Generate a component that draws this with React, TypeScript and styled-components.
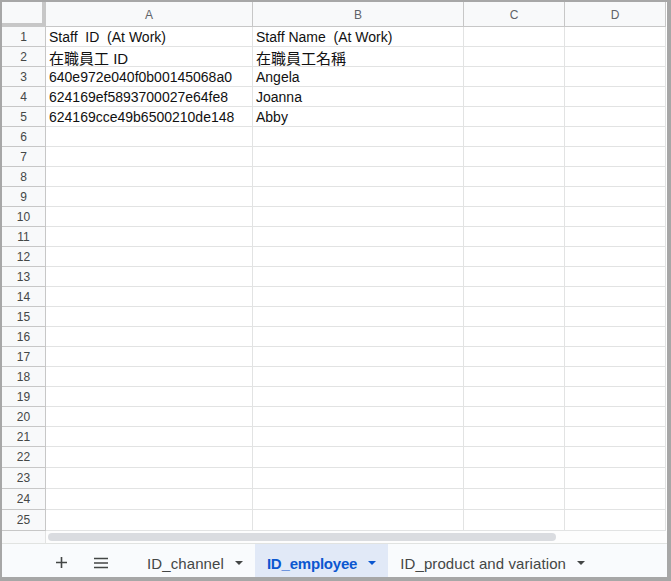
import styled, { createGlobalStyle } from "styled-components";

const GlobalStyle = createGlobalStyle`
  * { box-sizing: border-box; }
  html, body { margin: 0; padding: 0; background: #ffffff; overflow: hidden; }
  body { font-family: "Liberation Sans", Arial, "Noto Sans CJK TC", sans-serif; }
`;

const columns = ["A", "B", "C", "D"];

const data: Record<number, string[]> = {
  1: ["Staff  ID  (At Work)", "Staff Name  (At Work)"],
  2: ["在職員工 ID", "在職員工名稱"],
  3: ["640e972e040f0b00145068a0", "Angela"],
  4: ["624169ef5893700027e64fe8", "Joanna"],
  5: ["624169cce49b6500210de148", "Abby"],
};

const rows = Array.from({ length: 25 }, (_, i) => i + 1);

const tabs = [
  { name: "ID_channel", active: false },
  { name: "ID_employee", active: true },
  { name: "ID_product and variation", active: false },
];

function App() {
  return (
    <>
      <GlobalStyle />
      <Frame>
        <Sheet>
          <Corner />
          {columns.map((c) => (
            <ColHeader key={c}>{c}</ColHeader>
          ))}
          <Filler />
          {rows.map((r) => (
            <Row key={r}>
              <RowHeader>{r}</RowHeader>
              {columns.map((c, i) => (
                <Cell key={c} $cjk={r === 2}>
                  {data[r]?.[i] ?? ""}
                </Cell>
              ))}
              <Filler />
            </Row>
          ))}
        </Sheet>
        <ScrollRow>
          <ScrollStub />
          <Track>
            <Thumb />
          </Track>
        </ScrollRow>
        <TabBar>
          <IconButton aria-label="Add sheet">
            <svg width="13" height="13" viewBox="0 0 13 13">
              <path d="M6.5 1v11M1 6.5h11" stroke="#444746" strokeWidth="1.6" />
            </svg>
          </IconButton>
          <IconButton aria-label="All sheets">
            <svg width="16" height="12" viewBox="0 0 16 12">
              <path d="M1 1.5h14M1 6h14M1 10.5h14" stroke="#444746" strokeWidth="1.6" />
            </svg>
          </IconButton>
          <Tabs>
            {tabs.map((t) => (
              <Tab key={t.name} $active={t.active}>
                <span>{t.name}</span>
                <Caret $active={t.active} />
              </Tab>
            ))}
          </Tabs>
        </TabBar>
      </Frame>
    </>
  );
}

const Frame = styled.div`
  width: 671px;
  height: 581px;
  border-style: solid;
  border-color: #a7a7a7;
  border-width: 2px 4px 4px 2px;
  display: flex;
  flex-direction: column;
  background: #ffffff;
`;

const Sheet = styled.div`
  display: grid;
  grid-template-columns: 44px 207px 211px 101px 101px 1fr;
  grid-template-rows: 25px repeat(21, 20px) repeat(4, 21px);
`;

const Row = styled.div`
  display: contents;
`;

const Corner = styled.div`
  background: #f8f9fa;
  box-shadow: inset -4px -4px 0 #c7c7c7;
`;

const ColHeader = styled.div`
  background: #f8f9fa;
  border-right: 1px solid #c7c7c7;
  border-bottom: 1px solid #c7c7c7;
  display: flex;
  align-items: center;
  justify-content: center;
  font-size: 12px;
  color: #5f6368;
  padding-top: 1px;
`;

const RowHeader = styled.div`
  background: #f8f9fa;
  border-right: 1px solid #c7c7c7;
  border-bottom: 1px solid #c7c7c7;
  display: flex;
  align-items: center;
  justify-content: center;
  font-size: 12px;
  color: #444746;
`;

const Cell = styled.div<{ $cjk?: boolean }>`
  border-right: 1px solid #e2e3e3;
  border-bottom: 1px solid #e2e3e3;
  display: flex;
  align-items: center;
  padding: ${(p) => (p.$cjk ? "2px 3px 0" : "1px 3px 0")};
  font-size: ${(p) => (p.$cjk ? "15px" : "14px")};
  color: #111111;
  white-space: pre;
  overflow: hidden;
`;

const Filler = styled.div`
  background: #ffffff;
`;

const ScrollRow = styled.div`
  height: 13px;
  display: flex;
  border-bottom: 1px solid #e1e3e1;
`;

const ScrollStub = styled.div`
  width: 44px;
  background: #f8f9fa;
  border-right: 1px solid #e2e3e3;
`;

const Track = styled.div`
  flex: 1;
  padding: 2px 0 2px 2px;
  background: #fdfdfd;
`;

const Thumb = styled.div`
  width: 508px;
  height: 8px;
  border-radius: 4px;
  background: #dadce0;
`;

const TabBar = styled.div`
  flex: 1;
  display: flex;
  align-items: stretch;
  background: #f9fbfd;
  padding-left: 39px;
`;

const IconButton = styled.button`
  width: 40px;
  border: none;
  background: transparent;
  display: flex;
  align-items: center;
  justify-content: center;
  padding: 4px 0 0;
`;

const Tabs = styled.div`
  display: flex;
  margin-left: 14px;
`;

const Tab = styled.div<{ $active?: boolean }>`
  display: flex;
  align-items: center;
  gap: 11px;
  padding: 5px 12px 0 12px;
  font-size: 15px;
  font-weight: ${(p) => (p.$active ? 700 : 400)};
  letter-spacing: ${(p) => (p.$active ? "-0.2px" : "0.1px")};
  color: ${(p) => (p.$active ? "#0b57d0" : "#444746")};
  background: ${(p) => (p.$active ? "#e1e9f7" : "transparent")};
  white-space: nowrap;
`;

const Caret = styled.span<{ $active?: boolean }>`
  width: 0;
  height: 0;
  border-left: 4px solid transparent;
  border-right: 4px solid transparent;
  border-top: 4px solid ${(p) => (p.$active ? "#0b57d0" : "#444746")};
`;

export default App;
